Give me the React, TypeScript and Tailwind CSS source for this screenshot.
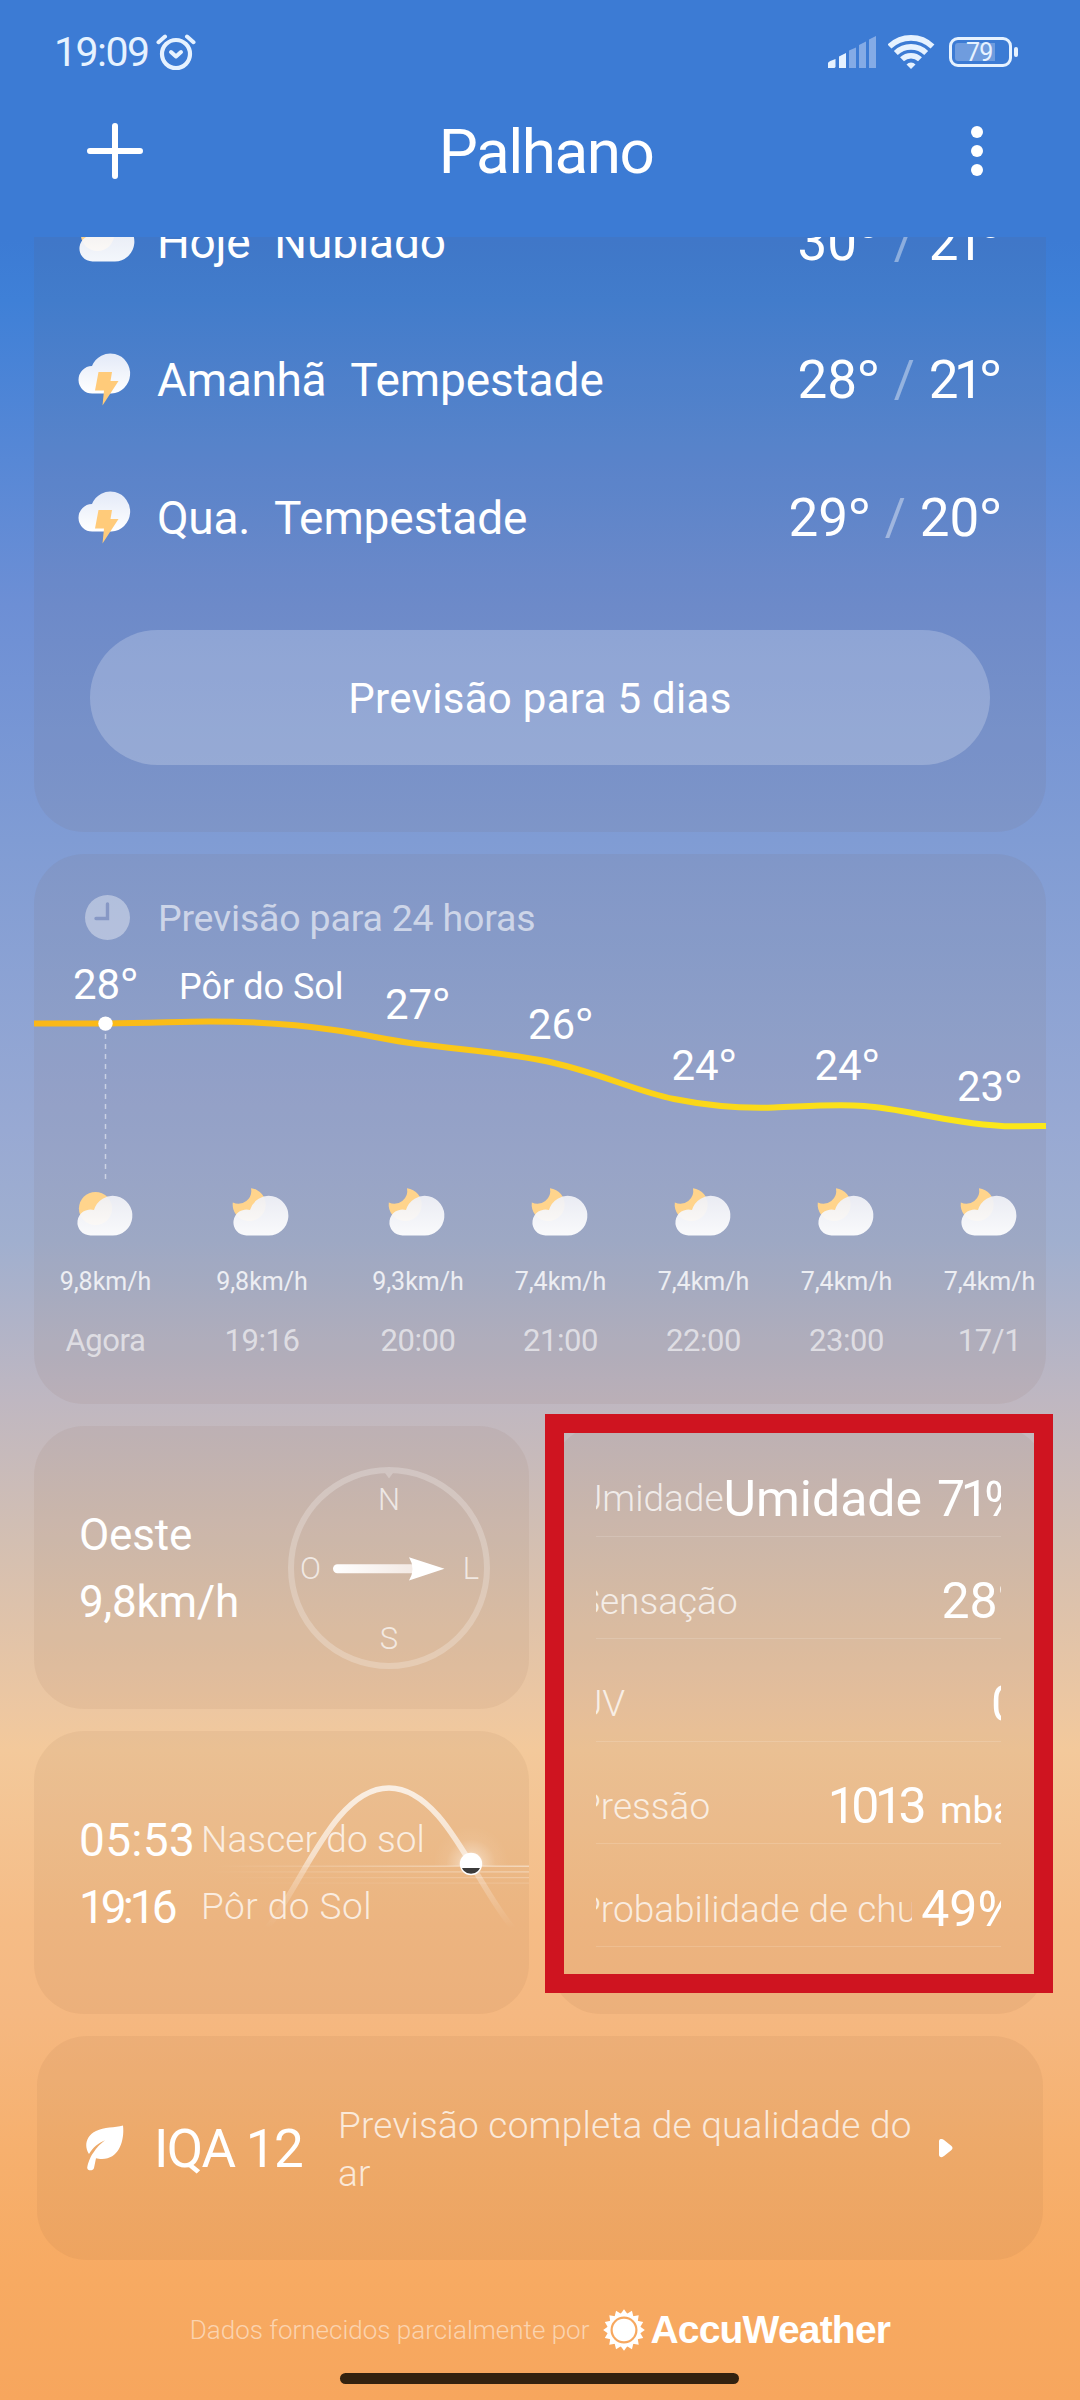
import { useId } from "react";
import clsx from "clsx";

const days = [
  { day: "Hoje", text: "Nublado", max: "30", min: "21", icon: "day" },
  { day: "Amanhã", text: "Tempestade", max: "28", min: "21", icon: "storm" },
  { day: "Qua.", text: "Tempestade", max: "29", min: "20", icon: "storm" },
];

const hours = [
  { time: "Agora", wind: "9,8km/h", icon: "day" },
  { time: "19:16", wind: "9,8km/h", icon: "night" },
  { time: "20:00", wind: "9,3km/h", icon: "night" },
  { time: "21:00", wind: "7,4km/h", icon: "night" },
  { time: "22:00", wind: "7,4km/h", icon: "night" },
  { time: "23:00", wind: "7,4km/h", icon: "night" },
  { time: "17/1", wind: "7,4km/h", icon: "night" },
];

const chartLabels = [
  { x: 39, y: 53.5, text: "28" },
  { x: 351, y: 74, text: "27" },
  { x: 494, y: 94, text: "26" },
  { x: 637.5, y: 135, text: "24" },
  { x: 780.5, y: 135, text: "24" },
  { x: 923, y: 156, text: "23" },
];

const details = [
  { label: "Umidade", prefix: "Umidade", value: "71", sign: "%", tight: true },
  { label: "Sensação", value: "28", sign: "°" },
  { label: "UV", value: "0" },
  { label: "Pressão", value: "1013", unit: "mbar", tight: true },
  { label: "Probabilidade de chuva", value: "49", sign: "%" },
];

const card = "rounded-[50px] bg-[#784c28]/[0.065]";

const CloudIcon = ({ night = false }: { night?: boolean }) => {
  const id = useId();

  return (
    <svg width="56" height="50" viewBox="1.5 0 56 50" overflow="visible">
      <defs>
        <linearGradient id={id} x1="0" y1="0" x2="0" y2="1">
          <stop offset="0" stopColor="#eff0f6" />
          <stop offset="1" stopColor="#ffffff" />
        </linearGradient>
      </defs>
      {night ? (
        <path
          d="M18.5 1.2 A16.5 16.5 0 1 1 0.3 15.5 A13 13 0 0 0 18.5 1.2Z"
          fill="#ffd48c"
        />
      ) : (
        <circle cx="19" cy="21.5" r="16.6" fill="#ffd48c" />
      )}
      <path
        d="M14 48.5 A13 13 0 1 1 17.5 23 A19.6 19.8 0 1 1 36 48.5Z"
        fill={`url(#${id})`}
        opacity="0.94"
      />
    </svg>
  );
};

const StormIcon = () => {
  const id = useId();

  return (
    <svg width="52" height="54" viewBox="0 0 52 54" overflow="visible">
      <defs>
        <linearGradient id={id} x1="0" y1="0" x2="0" y2="1">
          <stop offset="0" stopColor="#e3eaf8" />
          <stop offset="1" stopColor="#ffffff" />
        </linearGradient>
      </defs>
      <path
        d="M12.5 40.5 A13.7 13.7 0 0 1 12 13 A19.8 20 0 1 1 31.5 40.5Z"
        fill={`url(#${id})`}
      />
      <path d="M18.5 19 H32 L30.5 28 H38.5 L22.5 52.5 L24 37.5 H15Z" fill="#ffcb7a" />
    </svg>
  );
};

const Temp = ({ value }: { value: string }) => (
  <span className={clsx("text-[53px] leading-[60px]", value === "21" && "tracking-[-4.5px]")}>
    {value}
    <span className="font-['Noto_Sans'] leading-none tracking-normal">°</span>
  </span>
);

const StatusBar = () => (
  <div className="flex h-[104px] items-center pl-[54px] pr-[62px] text-[#e6f2ff]">
    <span className="pt-[2px] text-[41px] tracking-[-1.5px]">19:09</span>

    <svg className="ml-[7px]" width="40" height="38" viewBox="0 0 40 38" fill="none" stroke="currentColor" strokeLinecap="round">
      <circle cx="20" cy="21" r="14" strokeWidth="4.2" />
      <path d="M2.5 9.2 L9 3.6 M37.5 9.2 L31 3.6" strokeWidth="4" />
      <path d="M15 19 L20 23.5 L25 19" strokeWidth="4" strokeLinejoin="round" />
    </svg>

    <svg className="ml-auto" width="48" height="32" viewBox="0 0 48 32" fill="currentColor">
      <path d="M0 32 V27 Q0 25.5 7.5 23 V31 L6.5 32Z" />
      <path d="M11 32 V20.5 L18 17 V32Z" />
      <g fill="#84abe6">
        <path d="M21 32 V14.5 L28 11.5 V32Z" />
        <path d="M31 32 V9 L38 5.5 V32Z" />
        <path d="M41 32 V3.5 L48 0 V32Z" />
      </g>
    </svg>

    <svg className="ml-3" width="48" height="36" viewBox="1 0 48 36" fill="none" stroke="currentColor" strokeWidth="5.6">
      <path d="M2.5 12.5 A31 31 0 0 1 45.5 12.5" />
      <path d="M8.8 19 A22 22 0 0 1 39.2 19" />
      <path d="M15 25.3 A13 13 0 0 1 33 25.3" />
      <path d="M24 35 L19.5 30.5 A6 6 0 0 1 28.5 30.5Z" fill="currentColor" stroke="none" />
    </svg>

    <div className="ml-[13px] flex items-center gap-[2px]">
      <div className="flex h-[30px] w-[63px] rounded-[9px] border-[3px] border-current p-[3px]">
        <div className="relative h-full w-[40px] rounded-l-[3px] bg-[#6f9cde]">
          <span className="absolute left-[11px] top-0 text-[25px] leading-[19px] tracking-[-0.8px]">79</span>
        </div>
      </div>
      <div className="h-[10px] w-[4px] rounded-[2px] bg-current" />
    </div>
  </div>
);

const Header = () => (
  <header className="h-[237px]">
    <StatusBar />

    <div className="flex h-[94px] items-center justify-between pl-[86px] pr-[97px]">
      <svg width="58" height="58" viewBox="0 0 58 58" stroke="white" strokeWidth="6" strokeLinecap="round">
        <path d="M29 4 V54 M4 29 H54" />
      </svg>

      <h1 className="-ml-[23px] pt-[2px] text-[62px] leading-none tracking-[-1.5px]">Palhano</h1>

      <div className="flex flex-col gap-[7px]">
        <span className="size-3 rounded-full bg-white" />
        <span className="size-3 rounded-full bg-white" />
        <span className="size-3 rounded-full bg-white" />
      </div>
    </div>
  </header>
);

const DailyCard = () => (
  <section className="h-[595px] overflow-hidden rounded-b-[50px] bg-[#784c28]/[0.065]">
    <div className="-mt-[64px]">
      {days.map((d) => (
        <div key={d.day} className="flex h-[138px] items-center pl-[46px] pr-[44px]">
          <div className="flex w-[77px] items-center">
            {d.icon === "storm" ? (
              <StormIcon />
            ) : (
              <div className="pb-2">
                <CloudIcon />
              </div>
            )}
          </div>

          <span className="text-[46px] tracking-[-0.3px]">{d.day}</span>
          <span className="ml-[24px] text-[46px] tracking-[-0.1px]">{d.text}</span>

          <div className="ml-auto flex items-center">
            <Temp value={d.max} />
            <span className="mx-[14px] text-[51px] leading-[60px] text-white/40">/</span>
            <Temp value={d.min} />
          </div>
        </div>
      ))}
    </div>

    <button className="mx-14 mt-[43px] flex h-[135px] w-[900px] items-center justify-center rounded-full bg-white/[0.22] pt-[2px] text-[42px] tracking-[0.3px]">
      Previsão para 5 dias
    </button>
  </section>
);

const HourlyCard = () => (
  <section className={clsx(card, "h-[550px] overflow-hidden")}>
    <div className="flex h-[91px] items-start pl-[51px] pt-[41px]">
      <svg width="45" height="45" viewBox="0 0 45 45">
        <circle cx="22.5" cy="22.5" r="22.5" fill="white" opacity="0.38" />
        <path d="M22.5 9 V23.5 H11" fill="none" stroke="#8798c5" strokeWidth="3.4" strokeLinecap="round" />
      </svg>
      <h2 className="ml-[28px] pt-[1px] text-[37.5px] leading-[45px] tracking-[-0.2px] text-white/60">
        Previsão para 24 horas
      </h2>
    </div>

    <svg className="block" width="1012" height="240" viewBox="0 0 1012 240">
      <defs>
        <linearGradient id="temp" x1="0" y1="0" x2="1" y2="0">
          <stop offset="0" stopColor="#fab717" />
          <stop offset="0.5" stopColor="#fbcb17" />
          <stop offset="0.8" stopColor="#fbe11a" />
          <stop offset="1" stopColor="#fbe81a" />
        </linearGradient>
      </defs>

      <path d="M71.5 89 V235" stroke="white" strokeOpacity="0.5" strokeWidth="1.5" strokeDasharray="5 5" />
      <path
        d="M0 78.6 H71.5 C120 78 150 76.5 175 76.5 C215 76.5 260 79 300 85 C335 90 350 94.5 383.5 99 C430 105 470 108 506 115 C560 125 600 146 640 154 S710 163.5 740 162.5 S800 159 830 161 S890 171 927 176.5 S975 181.5 1012 181"
        fill="none"
        stroke="url(#temp)"
        strokeWidth="6"
      />
      <circle cx="71.5" cy="78.6" r="7.2" fill="white" />

      {chartLabels.map((l) => (
        <text key={l.x} x={l.x} y={l.y} fill="white" fontSize="42">
          {l.text}
          <tspan className="font-['Noto_Sans']">°</tspan>
        </text>
      ))}
      <text x="145" y="53.5" fill="white" fontSize="36">
        Pôr do Sol
      </text>
    </svg>

    <div className="grid w-[1027px] grid-cols-[143px_170px_142px_143px_143px_143px_143px] pt-[2px]">
      {hours.map((h) => (
        <div key={h.time} className="flex flex-col items-center">
          <CloudIcon night={h.icon === "night"} />
          <span className="mt-[30px] text-[25px] leading-[30px] text-white/80">{h.wind}</span>
          <span className="mt-[26px] text-[31px] leading-9 tracking-[-0.4px] text-white/60">{h.time}</span>
        </div>
      ))}
    </div>
  </section>
);

const WindCard = () => (
  <section className={clsx(card, "flex h-[283px] items-center pl-[45px] pr-[39px]")}>
    <div className="pt-[3px] text-[44px] leading-[67px] tracking-[-0.2px]">
      <p>Oeste</p>
      <p>9,8km/h</p>
    </div>

    <svg className="ml-auto" width="202" height="202" viewBox="0 0 202 202">
      <defs>
        <linearGradient id="needle" x1="0" y1="0" x2="1" y2="0">
          <stop offset="0" stopColor="#ffffff" />
          <stop offset="0.9" stopColor="#f4ebe6" />
        </linearGradient>
      </defs>
      <circle cx="101" cy="101" r="98" fill="none" stroke="white" strokeOpacity="0.24" strokeWidth="6" />
      <path d="M97 6 H105 L101 11.5Z" fill="white" opacity="0.24" />
      <g fill="white" fillOpacity="0.7" fontSize="31" fontWeight="300" textAnchor="middle">
        <text x="101" y="43">N</text>
        <text x="22.5" y="112">O</text>
        <text x="183" y="112">L</text>
        <text x="101" y="181.5">S</text>
      </g>
      <rect x="45" y="97.3" width="82" height="9" rx="4.5" fill="url(#needle)" />
      <path d="M121 90.3 L156.5 101.8 L121 113.5 Q128 101.8 121 90.3Z" fill="white" />
    </svg>
  </section>
);

const SunCard = () => (
  <section className={clsx(card, "relative flex h-[283px] items-center overflow-hidden pl-[45px]")}>
    <div className="grid grid-cols-[122px_auto] items-center pt-[2px]">
      <span className="text-[46px] leading-[67px] tracking-[0.3px]">05:53</span>
      <span className="text-[37px] font-light tracking-[0.1px] text-white/75">Nascer do sol</span>
      <span className="text-[46px] leading-[67px] tracking-[-4px]">19:16</span>
      <span className="text-[37px] font-light tracking-[0.5px] text-white/75">Pôr do Sol</span>
    </div>

    <svg className="absolute inset-0" width="495" height="283" viewBox="0 0 495 283">
      <defs>
        <linearGradient id="arc" x1="0" y1="0" x2="0" y2="1">
          <stop offset="0" stopColor="white" stopOpacity="0.75" />
          <stop offset="0.5" stopColor="white" stopOpacity="0.55" />
          <stop offset="0.6" stopColor="white" stopOpacity="0.32" />
          <stop offset="1" stopColor="white" stopOpacity="0" />
        </linearGradient>
        <linearGradient id="horizon" x1="0" y1="0" x2="1" y2="0">
          <stop offset="0" stopColor="white" stopOpacity="0" />
          <stop offset="1" stopColor="white" stopOpacity="0.55" />
        </linearGradient>
        <radialGradient id="glow">
          <stop offset="0" stopColor="white" stopOpacity="0.9" />
          <stop offset="0.35" stopColor="white" stopOpacity="0.28" />
          <stop offset="0.65" stopColor="white" stopOpacity="0.06" />
          <stop offset="1" stopColor="white" stopOpacity="0" />
        </radialGradient>
        <clipPath id="above">
          <rect x="380" y="60" width="115" height="75" />
        </clipPath>
        <clipPath id="below">
          <rect x="420" y="137" width="40" height="20" />
        </clipPath>
      </defs>

      <path d="M233 197 C268 155 300 57 355 57 S442 155 479 197" fill="none" stroke="url(#arc)" strokeWidth="5.5" />
      <rect x="180" y="134.6" width="315" height="1.2" fill="url(#horizon)" />
      <rect x="170" y="140.3" width="325" height="1.2" fill="url(#horizon)" opacity="0.7" />
      <rect x="190" y="146" width="305" height="1.2" fill="url(#horizon)" opacity="0.45" />
      <rect x="190" y="151.5" width="305" height="1.2" fill="url(#horizon)" opacity="0.25" />
      <circle cx="437" cy="133" r="38" fill="url(#glow)" clipPath="url(#above)" />
      <circle cx="437" cy="133" r="11.2" fill="white" />
      <circle cx="437" cy="133" r="9.8" fill="#3b3b3b" clipPath="url(#below)" />
    </svg>
  </section>
);

const DetailsCard = () => (
  <section className={clsx(card, "relative row-span-2 px-[45px] pt-[8px]")}>
    <div className="overflow-hidden">
      {details.map((d) => (
        <div key={d.label} className="h-[102.6px] border-b-[1.5px] border-white/15 pt-[27px]">
          <div className="-ml-[18px] flex h-[76px] w-[441px] items-center justify-between whitespace-nowrap">
            <span
              className={clsx(
                "shrink-0 overflow-hidden text-[37px] font-light text-white/75",
                d.label.length > 12 && "w-[334px]"
              )}
            >
              {d.label}
            </span>
            <span className={clsx("flex shrink-0 items-baseline text-[50px]", d.unit && "-mr-[7px]")}>
              {d.prefix && <span className="mr-[15px]">{d.prefix}</span>}
              <span className={clsx(d.tight && "tracking-[-4.5px]")}>{d.value}</span>
              {d.sign && <span className="font-['Noto_Sans'] leading-none">{d.sign}</span>}
              {d.unit && <span className="ml-[18px] text-[37px]">{d.unit}</span>}
            </span>
          </div>
        </div>
      ))}
    </div>

    {/* Highlight */}
    <div className="absolute -left-[6px] -top-[12px] h-[579px] w-[508px] border-[19px] border-[#cf1420]" />
  </section>
);

const AirCard = () => (
  <section className={clsx(card, "mx-[3px] flex h-[224px] items-center pl-[48px]")}>
    <svg width="40" height="46" viewBox="0 0 40 46">
      <path
        d="M38 0.5 C39.5 12 36 34 17 34 C14.5 34 12.5 33.8 11 33.3 L9 43 C8.3 46.3 1.5 46.3 2.3 42 C3.3 37 6 30.5 8.5 27.5 C11.5 23 15.5 18.5 20 15.3 C13 18.5 8 22.5 4 29 C-1 22 0.5 11 11 6 C19 2 30 2.8 38 0.5Z"
        fill="white"
      />
    </svg>
    <span className="ml-[29px] w-[184px] whitespace-nowrap pt-[3px] text-[53px] tracking-[-1.7px]">IQA 12</span>
    <p className="w-[596px] pt-[3px] text-[37px] font-light leading-[48px] tracking-[0.23px] text-white/75">
      Previsão completa de qualidade do ar
    </p>
    <svg className="ml-[4px]" width="16" height="20" viewBox="0 0 16 20">
      <path d="M2.5 1 Q4.5 0.5 6 2 L13.5 8 Q15.5 10 13.5 12 L6 18 Q4.5 19.5 2.5 19 Q1 18.5 1 17 V3 Q1 1.5 2.5 1Z" fill="white" />
    </svg>
  </section>
);

const sunRays = Array.from({ length: 16 }, (_, i) => i * 22.5);

const Footer = () => (
  <footer className="flex h-[140px] items-center justify-center">
    <span className="text-[26px] font-light text-white/50">
      Dados fornecidos parcialmente por
    </span>
    <svg className="ml-[14px]" width="42" height="42" viewBox="-21 -21 42 42" fill="white">
      {sunRays.map((a) => (
        <path key={a} d="M-4.2 -15 L0 -20.8 L4.2 -15Z" transform={`rotate(${a})`} />
      ))}
      <circle r="15" fill="none" stroke="white" strokeWidth="3" />
      <circle r="11.3" />
    </svg>
    <span className="ml-[5px] font-['Liberation_Sans'] text-[39px] font-bold tracking-[-0.8px]">
      AccuWeather
    </span>
  </footer>
);

const App = () => {
  return (
    <div className="relative h-[2400px] w-[1080px] overflow-hidden bg-[linear-gradient(180deg,#3c7bd4_0px,#3c7bd4_240px,#3f80d7_300px,#6d8fd5_605px,#809cd4_840px,#98a9d3_1130px,#a0afcf_1240px,#bfb7c1_1400px,#d3bfb2_1540px,#edc7a1_1710px,#f3c99b_1750px,#f5bc86_1925px,#f5b881_2014px,#f6b06e_2150px,#f7aa62_2280px,#f7a65d_2400px)] font-[Roboto,sans-serif] text-white">
      <Header />

      <main className="flex flex-col gap-[22px] px-[34px]">
        <DailyCard />
        <HourlyCard />

        <div className="grid grid-cols-2 gap-[22px]">
          <WindCard />
          <DetailsCard />
          <SunCard />
        </div>

        <AirCard />
      </main>

      <Footer />

      <div className="absolute bottom-4 left-[340px] h-[11px] w-[399px] rounded-full bg-[#33220f]" />
    </div>
  );
};

export default App;
